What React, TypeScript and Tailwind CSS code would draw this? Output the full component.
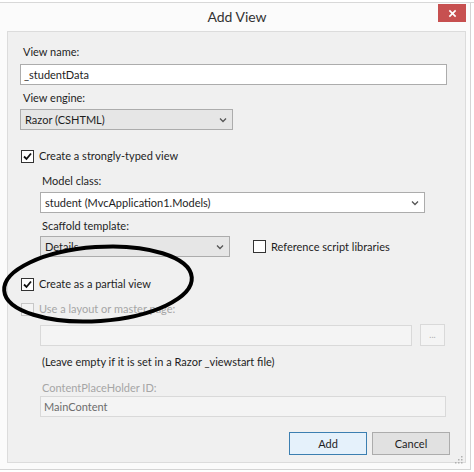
import React from 'react';

const font = { fontFamily: 'Lato, "Segoe UI", "Open Sans", sans-serif' };

function Check({ checked, disabled }: { checked?: boolean; disabled?: boolean }) {
  return (
    <span
      className={`flex items-center justify-center w-[13px] h-[13px] border shrink-0 ${disabled ? 'border-[#c8c8c8] bg-[#f4f4f4]' : 'border-[#333333] bg-white'}`}
    >
      {checked && (
        <svg viewBox="0 0 11 11" className="w-[11px] h-[11px]">
          <path d="M2 5.5 L4.5 8 L9 2.5" fill="none" stroke="#111" strokeWidth="1.8" />
        </svg>
      )}
    </span>
  );
}

function Chevron() {
  return (
    <svg viewBox="0 0 8 6" className="w-[8px] h-[6px]">
      <path d="M1 1.5 L4 4.5 L7 1.5" fill="none" stroke="#555" strokeWidth="1.3" />
    </svg>
  );
}

function Select({ value, width, gray }: { value: string; width: string; gray?: boolean }) {
  return (
    <div
      className={`${width} h-[21px] flex items-center justify-between pl-[4px] pr-[5px] border border-[#acacac] ${gray ? 'bg-[#e6e6e6]' : 'bg-white'} text-[#1e1e1e]`}
    >
      <span>{value}</span>
      <Chevron />
    </div>
  );
}

export default function App() {
  return (
    <div className="relative w-[474px] h-[472px] bg-white overflow-hidden text-[11px] leading-[16px]" style={font}>
      {/* strip of the window behind */}
      <div className="h-[3px] bg-white border-b border-[#d8d8d8]" />

      <div className="mr-[3px] border-r border-b border-[#d4d4d4] bg-[#fbfbfb] h-[467px]">
        {/* title bar */}
        <div className="h-[28px] flex items-start justify-between pl-[36px] pr-[4px]">
          <span className="flex-1 text-center text-[14px] leading-[28px] text-[#333]">Add View</span>
          <button className="mt-[1px] w-7 h-[18px] bg-[#c75050] flex items-center justify-center">
            <svg viewBox="0 0 10 10" width="9" height="9">
              <path d="M1.5 1.5 L8.5 8.5 M8.5 1.5 L1.5 8.5" stroke="#ffffff" strokeWidth="1.8" />
            </svg>
          </button>
        </div>

        {/* client area */}
        <div className="ml-[7px] mr-[4px] h-[432px] border border-[#dcdcdc] bg-[#f0f0f0] pl-[12px] pt-[12px] text-[#1e1e1e]">
          <div className="ml-[3px]">View name:</div>
          <div className="mt-[4px] w-[427px] h-[21px] border border-[#acacac] bg-white flex items-center pl-[3px]">
            _studentData
          </div>
          <div className="mt-[5px] ml-[3px]">View engine:</div>
          <div className="mt-[3px]">
            <Select value="Razor (CSHTML)" width="w-[213px]" gray />
          </div>

          <label className="mt-[18px] ml-[1px] flex items-center gap-[5px]">
            <Check checked />
            <span>Create a strongly-typed view</span>
          </label>

          <div className="pl-[20px]">
            <div className="mt-[9px] ml-[2px]">Model class:</div>
            <div className="mt-[3px]">
              <Select value="student (MvcApplication1.Models)" width="w-[385px]" />
            </div>
            <div className="mt-[5px] ml-[2px]">Scaffold template:</div>
            <div className="mt-[2px] flex items-center">
              <Select value="Details" width="w-[190px]" gray />
              <label className="ml-[23px] flex items-center gap-[5px]">
                <Check />
                <span>Reference script libraries</span>
              </label>
            </div>
          </div>

          <label className="mt-[19px] ml-[1px] flex items-center gap-[5px]">
            <Check checked />
            <span>Create as a partial view</span>
          </label>
          <label className="mt-[9px] ml-[1px] flex items-center gap-[5px] text-[#a6a6a6]">
            <Check disabled />
            <span>Use a layout or master page:</span>
          </label>

          <div className="pl-[20px]">
            <div className="mt-[7px] flex items-center gap-[8px]">
              <div className="w-[372px] h-[21px] border border-[#d9d9d9] bg-[#f4f4f4]" />
              <div className="w-[25px] h-[22px] border border-[#d9d9d9] bg-[#f4f4f4] flex items-center justify-center text-[9px] text-[#b0b0b0]">
                ...
              </div>
            </div>
            <div className="mt-[8px] ml-[2px]">(Leave empty if it is set in a Razor _viewstart file)</div>
            <div className="mt-[10px] ml-[2px] text-[#a6a6a6]">ContentPlaceHolder ID:</div>
            <div className="mt-0 w-[406px] h-[21px] border border-[#d9d9d9] bg-[#f4f4f4] flex items-center pl-[3px] text-[#6d6d6d]">
              MainContent
            </div>
          </div>

          <div className="mt-[15px] flex justify-end gap-[5px] pr-[15px]">
            <button className="w-[78px] h-[23px] border border-[#3c7fb1] bg-[#e5f1fb] text-[#1e1e1e]" style={font}>
              Add
            </button>
            <button className="w-[78px] h-[23px] border border-[#acacac] bg-[#e1e1e1] text-[#1e1e1e]" style={font}>
              Cancel
            </button>
          </div>
          <div className="flex justify-end pr-[2px] mt-[1px]">
            <svg viewBox="0 0 8 8" className="w-[8px] h-[8px]">
              <rect x="6" y="0" width="1.5" height="1.5" fill="#b0b0b0" />
              <rect x="3" y="3" width="1.5" height="1.5" fill="#b0b0b0" />
              <rect x="6" y="3" width="1.5" height="1.5" fill="#b0b0b0" />
              <rect x="0" y="6" width="1.5" height="1.5" fill="#b0b0b0" />
              <rect x="3" y="6" width="1.5" height="1.5" fill="#b0b0b0" />
              <rect x="6" y="6" width="1.5" height="1.5" fill="#b0b0b0" />
            </svg>
          </div>
        </div>
      </div>

      {/* hand-drawn highlight ellipse over the partial-view option */}
      <svg className="absolute left-0 top-[240px] pointer-events-none" width="200" height="90" viewBox="0 240 200 90">
        <ellipse cx="98" cy="284" rx="94" ry="37" transform="rotate(-4 98 284)" fill="none" stroke="#000" strokeWidth="4" />
      </svg>
    </div>
  );
}
